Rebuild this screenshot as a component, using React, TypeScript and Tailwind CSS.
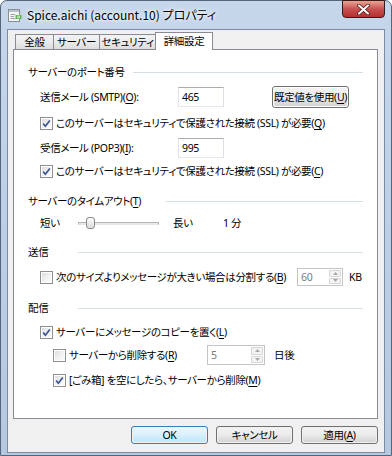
import React from 'react'

function Check({ checked }: { checked: boolean }) {
    return (
        <span className="w-[13px] h-[13px] border border-[#8e8f8f] bg-white p-[1px] shrink-0 flex">
            <span className="flex-1 bg-gradient-to-br from-[#dcdcdc] via-[#f0f0f0] to-[#fcfcfc] flex items-center justify-center">
                {checked && (
                    <svg width="9" height="9" viewBox="0 0 9 9">
                        <path d="M1.2 4.6 L3.4 7.2 L7.8 1.4" fill="none" stroke="#3a5694" strokeWidth="1.7" />
                    </svg>
                )}
            </span>
        </span>
    )
}

function GroupHeader({ label, width }: { label: React.ReactNode; width: string }) {
    return (
        <div className="flex items-center h-[16px] pr-[14px]">
            <div className={`${width} shrink-0 whitespace-nowrap`}>{label}</div>
            <div className="flex-1 h-px bg-[#d5dfe5]" />
        </div>
    )
}

function Spinner({ value, width }: { value: string; width: string }) {
    return (
        <div className={`${width} h-full border border-[#c3c6c9] bg-white flex shrink-0`}>
            <div className="flex-1 pl-[3px] text-[#7a7a7a] flex items-center">{value}</div>
            <div className="w-[14px] flex flex-col gap-px p-px">
                <div className="flex-1 border border-[#d6d6d6] bg-[#f4f4f4] rounded-[1px] flex items-center justify-center">
                    <svg width="5" height="3" viewBox="0 0 5 3"><path d="M0 3 L2.5 0 L5 3 Z" fill="#a8a8a8" /></svg>
                </div>
                <div className="flex-1 border border-[#d6d6d6] bg-[#f4f4f4] rounded-[1px] flex items-center justify-center">
                    <svg width="5" height="3" viewBox="0 0 5 3"><path d="M0 0 L2.5 3 L5 0 Z" fill="#a8a8a8" /></svg>
                </div>
            </div>
        </div>
    )
}

function WinButton({ children, isDefault }: { children: React.ReactNode; isDefault?: boolean }) {
    return (
        <div className={`w-[77px] h-full rounded-[3px] border ${isDefault ? 'border-[#3c7fb1]' : 'border-[#707070]'} p-px`}>
            <div className={`w-full h-full rounded-[2px] flex items-center justify-center whitespace-nowrap ${isDefault ? 'bg-gradient-to-b from-[#eaf6fd] via-[#d9f0fc] to-[#bee6fd]' : 'bg-gradient-to-b from-[#f2f2f2] via-[#ebebeb] to-[#d4d4d4]'}`}>
                {children}
            </div>
        </div>
    )
}

export default function App() {
    return (
        <div className="w-[392px] h-[456px] font-['Noto_Sans','Noto_Sans_CJK_JP',sans-serif] text-[10.5px] tracking-[-0.35px] leading-[16px] text-black [font-feature-settings:'palt']">
            <div className="w-full h-full rounded-t-[7px] border border-[#55657a] bg-gradient-to-b from-[#c6d7eb] via-[#bccfe6] to-[#b4c8e1] flex flex-col px-[6px] pb-[2px]">
                {/* title bar */}
                <div className="h-[28px] flex shrink-0">
                    <div className="flex items-center gap-[5px] pl-px">
                        <svg width="14" height="13" viewBox="0 0 14 13">
                            <rect x="0.5" y="0.5" width="11" height="12" fill="#f4f4f4" stroke="#8a8f96" />
                            <rect x="1" y="1" width="10" height="2" fill="#b9c2cc" />
                            <path d="M2.5 5.5 H7 M2.5 7.5 H6 M2.5 9.5 H7" stroke="#9aa1a8" />
                            <path d="M7.5 6 L13.5 6 L13.5 10 L7.5 10 Z" fill="#59b54a" />
                            <path d="M9 7.2 L12 7.2 M9 8.8 L12 8.8" stroke="#d7f0cf" />
                        </svg>
                        <span className="font-['Noto_Sans_CJK_JP',sans-serif] text-[12px] tracking-normal text-black [text-shadow:0_0_6px_#ffffff,0_0_3px_#ffffff]">Spice.aichi (account.10) プロパティ</span>
                    </div>
                    <div className="ml-auto w-[43px] h-[18px] -mt-px rounded-b-[4px] border border-[#3d1a1a] bg-gradient-to-b from-[#e8a493] via-[#c75050] to-[#b52f2b] flex items-center justify-center">
                        <svg width="13" height="11" viewBox="0 0 13 11">
                            <path d="M2 1.5 L11 9.5 M11 1.5 L2 9.5" stroke="#4a1c1c" strokeWidth="3.6" strokeLinecap="round" />
                            <path d="M2 1.5 L11 9.5 M11 1.5 L2 9.5" stroke="#ffffff" strokeWidth="2" strokeLinecap="round" />
                        </svg>
                    </div>
                </div>

                {/* client area */}
                <div className="flex-1 border border-[#7a8ba3] bg-[#f0f0f0] flex flex-col pl-[5px] pr-[6px]">
                    {/* tabs */}
                    <div className="h-[18px] flex items-end pl-[2px] mt-px">
                        <div className="w-[39px] h-[15px] border border-b-0 border-[#898c95] bg-gradient-to-b from-[#f3f3f3] via-[#ebebeb] to-[#dcdcdc] flex items-center justify-center">全般</div>
                        <div className="w-[47px] h-[15px] -ml-px border border-b-0 border-[#898c95] bg-gradient-to-b from-[#f3f3f3] via-[#ebebeb] to-[#dcdcdc] flex items-center justify-center">サーバー</div>
                        <div className="w-[57px] h-[15px] -ml-px border border-b-0 border-[#898c95] bg-gradient-to-b from-[#f3f3f3] via-[#ebebeb] to-[#dcdcdc] flex items-center justify-center">セキュリティ</div>
                        <div className="relative z-10 w-[58px] h-[18px] -ml-px -mb-px border border-b-0 border-[#898c95] bg-white flex items-center justify-center pb-[2px]">詳細設定</div>
                    </div>

                    {/* panel */}
                    <div className="h-[370px] border border-[#898c95] bg-white flex flex-col pl-[14px] pt-[14px]">
                        <GroupHeader label="サーバーのポート番号" width="w-[105px]" />

                        <div className="mt-[6px] h-[22px] ml-[12px] flex items-center">
                            <div className="w-[138px] whitespace-nowrap">送信メール (SMTP)(<u className="underline-offset-2">O</u>):</div>
                            <div className="w-[46px] h-[20px] border border-[#abadb3] border-l-[#e2e3ea] border-r-[#dbdfe6] border-b-[#e3e9ef] bg-white pl-[3px] flex items-center">465</div>
                            <div className="ml-[48px] w-[96px] h-[22px]">
                                <WinButton>既定値を使用(<u className="underline-offset-2">U</u>)</WinButton>
                            </div>
                        </div>

                        <div className="mt-[7px] h-[16px] ml-[12px] flex items-center gap-[3px]">
                            <Check checked />
                            <span className="whitespace-nowrap">このサーバーはセキュリティで保護された接続 (SSL) が必要(<u className="underline-offset-2">Q</u>)</span>
                        </div>

                        <div className="mt-[6px] h-[22px] ml-[12px] flex items-center">
                            <div className="w-[138px] whitespace-nowrap">受信メール (POP3)(<u className="underline-offset-2">I</u>):</div>
                            <div className="w-[46px] h-[20px] border border-[#abadb3] border-l-[#e2e3ea] border-r-[#dbdfe6] border-b-[#e3e9ef] bg-white pl-[3px] flex items-center">995</div>
                        </div>

                        <div className="mt-[4px] h-[16px] ml-[12px] flex items-center gap-[3px]">
                            <Check checked />
                            <span className="whitespace-nowrap">このサーバーはセキュリティで保護された接続 (SSL) が必要(<u className="underline-offset-2">C</u>)</span>
                        </div>

                        <div className="mt-[14px]">
                            <GroupHeader label={<>サーバーのタイムアウト(<u className="underline-offset-2">T</u>)</>} width="w-[138px]" />
                        </div>

                        <div className="mt-[6px] h-[16px] ml-[12px] flex items-center">
                            <div className="w-[38px]">短い</div>
                            <div className="relative w-[81px] h-[16px] flex items-center">
                                <div className="w-full h-[3px] border border-[#b4b4b4] border-b-[#e6e6e6] bg-[#e7eaea]" />
                                <div className="absolute left-[8px] top-[2px] w-[9px] h-[12px] rounded-[3px] border border-[#8a8a8a] bg-gradient-to-b from-[#fafafa] to-[#dcdcdc]" />
                            </div>
                            <div className="ml-[14px] w-[50px]">長い</div>
                            <div>1 分</div>
                        </div>

                        <div className="mt-[13px]">
                            <GroupHeader label="送信" width="w-[50px]" />
                        </div>

                        <div className="mt-[8px] h-[18px] ml-[12px] flex items-center">
                            <Check checked={false} />
                            <div className="ml-[3px] w-[241px] whitespace-nowrap">次のサイズよりメッセージが大きい場合は分割する(<u className="underline-offset-2">B</u>)</div>
                            <Spinner value="60" width="w-[46px]" />
                            <div className="ml-[6px]">KB</div>
                        </div>

                        <div className="mt-[14px]">
                            <GroupHeader label="配信" width="w-[50px]" />
                        </div>

                        <div className="mt-[8px] h-[16px] ml-[12px] flex items-center gap-[3px]">
                            <Check checked />
                            <span className="whitespace-nowrap">サーバーにメッセージのコピーを置く(<u className="underline-offset-2">L</u>)</span>
                        </div>

                        <div className="mt-[5px] h-[20px] ml-[25px] flex items-center">
                            <Check checked={false} />
                            <div className="ml-[3px] w-[138px] whitespace-nowrap">サーバーから削除する(<u className="underline-offset-2">R</u>)</div>
                            <Spinner value="5" width="w-[58px]" />
                            <div className="ml-[9px]">日後</div>
                        </div>

                        <div className="mt-[7px] h-[16px] ml-[25px] flex items-center gap-[3px]">
                            <Check checked />
                            <span className="whitespace-nowrap">[ごみ箱] を空にしたら、サーバーから削除(<u className="underline-offset-2">M</u>)</span>
                        </div>
                    </div>

                    {/* buttons */}
                    <div className="mt-[7px] h-[18px] flex justify-end gap-[8px]">
                        <WinButton isDefault>OK</WinButton>
                        <WinButton>キャンセル</WinButton>
                        <WinButton>適用(<u className="underline-offset-2">A</u>)</WinButton>
                    </div>
                </div>
            </div>
        </div>
    )
}
